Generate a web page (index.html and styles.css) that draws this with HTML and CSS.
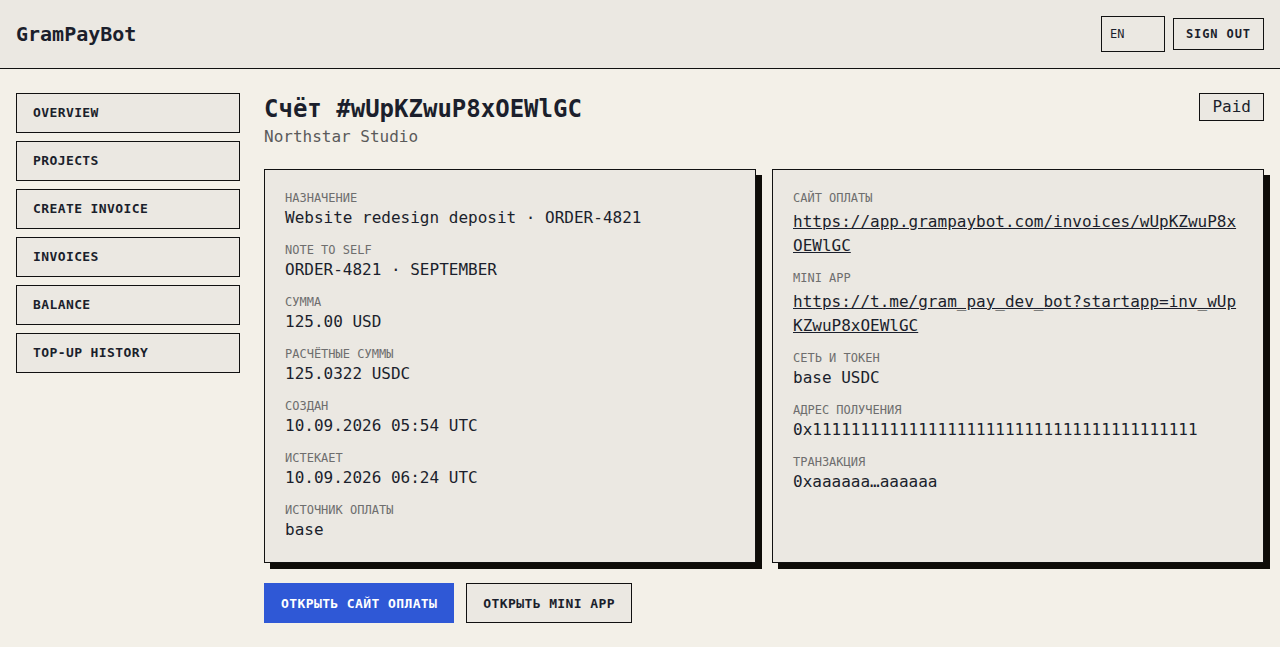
FILE: index.html
```html
<!DOCTYPE html>
<html lang="ru">
<head>
<meta charset="utf-8">
<title>GramPayBot</title>
<link rel="stylesheet" href="styles.css">
</head>
<body>
<header class="topbar">
  <div class="logo">GramPayBot</div>
  <div class="top-actions">
    <div class="lang">EN</div>
    <button class="btn-outline small">SIGN OUT</button>
  </div>
</header>
<div class="layout">
  <nav class="sidebar">
    <a class="nav-item">OVERVIEW</a>
    <a class="nav-item">PROJECTS</a>
    <a class="nav-item">CREATE INVOICE</a>
    <a class="nav-item">INVOICES</a>
    <a class="nav-item">BALANCE</a>
    <a class="nav-item">TOP-UP HISTORY</a>
  </nav>
  <main class="main">
    <div class="page-head">
      <div>
        <h1 class="title">Счёт #wUpKZwuP8xOEWlGC</h1>
        <div class="subtitle">Northstar Studio</div>
      </div>
      <span class="badge">Paid</span>
    </div>
    <div class="cards">
      <section class="card">
        <div class="field"><div class="label">Назначение</div><div class="value">Website redesign deposit · ORDER-4821</div></div>
        <div class="field"><div class="label">Note to self</div><div class="value">ORDER-4821 · SEPTEMBER</div></div>
        <div class="field"><div class="label">Сумма</div><div class="value">125.00 USD</div></div>
        <div class="field"><div class="label">Расчётные суммы</div><div class="value">125.0322 USDC</div></div>
        <div class="field"><div class="label">Создан</div><div class="value">10.09.2026 05:54 UTC</div></div>
        <div class="field"><div class="label">Истекает</div><div class="value">10.09.2026 06:24 UTC</div></div>
        <div class="field"><div class="label">Источник оплаты</div><div class="value">base</div></div>
      </section>
      <section class="card">
        <div class="field"><div class="label">Сайт оплаты</div><a class="value link">https://app.grampaybot.com/invoices/wUpKZwuP8xOEWlGC</a></div>
        <div class="field"><div class="label">Mini App</div><a class="value link">https://t.me/gram_pay_dev_bot?startapp=inv_wUpKZwuP8xOEWlGC</a></div>
        <div class="field"><div class="label">Сеть и токен</div><div class="value">base USDC</div></div>
        <div class="field"><div class="label">Адрес получения</div><div class="value">0x1111111111111111111111111111111111111111</div></div>
        <div class="field"><div class="label">Транзакция</div><div class="value">0xaaaaaa…aaaaaa</div></div>
      </section>
    </div>
    <div class="actions">
      <button class="btn-primary">ОТКРЫТЬ САЙТ ОПЛАТЫ</button>
      <button class="btn-outline">ОТКРЫТЬ MINI APP</button>
    </div>
  </main>
</div>
</body>
</html>
```
FILE: styles.css
```css
* { box-sizing: border-box; }
html, body { margin: 0; padding: 0; }
body {
  background: #f3f0e8;
  color: #1b1f2c;
  font-family: "DejaVu Sans Mono", "Liberation Mono", monospace;
  font-size: 16px;
}
.topbar {
  height: 69px;
  background: #ebe8e2;
  border-bottom: 1px solid #111;
  display: flex;
  align-items: center;
  justify-content: space-between;
  padding: 0 16px;
}
.logo { font-size: 20px; font-weight: bold; line-height: 24px; }
.top-actions { display: flex; align-items: center; gap: 8px; }
.lang {
  width: 64px; height: 36px;
  border: 1px solid #111;
  background: #ebe8e2;
  font-size: 12px;
  line-height: 34px;
  padding: 0 8px;
}
button { font-family: inherit; cursor: pointer; }
.btn-outline, .btn-primary, .nav-item {
  font-weight: bold;
  font-size: 13px;
  letter-spacing: 0.4px;
}
.btn-outline {
  height: 40px;
  border: 1px solid #111;
  background: #ebe8e2;
  color: #1b1f2c;
  padding: 0 16px;
}
.btn-outline.small { height: 32px; padding: 0 12px; font-size: 12px; letter-spacing: 0.9px; }
.btn-primary {
  height: 40px;
  border: 1px solid #2f58d6;
  background: #2f58d6;
  color: #fff;
  padding: 0 16px;
}
.layout {
  display: flex;
  gap: 24px;
  padding: 24px 16px;
}
.sidebar {
  width: 224px;
  flex: none;
  display: flex;
  flex-direction: column;
  gap: 8px;
}
.nav-item {
  display: block;
  height: 40px;
  line-height: 38px;
  border: 1px solid #111;
  background: #ebe8e2;
  padding: 0 16px;
  color: #1b1f2c;
}
.main { flex: 1; min-width: 0; }
.page-head {
  display: flex;
  justify-content: space-between;
  align-items: flex-start;
}
.title { margin: 1px 0 0; font-size: 24px; line-height: 30px; font-weight: bold; }
.subtitle { margin-top: 1px; line-height: 24px; color: #5a5a5a; }
.badge {
  border: 1px solid #111;
  background: #ebe8e2;
  padding: 1px 12px;
  line-height: 24px;
  font-size: 16px;
}
.cards {
  margin-top: 20px;
  display: grid;
  grid-template-columns: 1fr 1fr;
  gap: 16px;
  padding-right: 6px;
  margin-right: -6px;
}
.card {
  border: 1px solid #111;
  background: #ebe8e2;
  box-shadow: 6px 6px 0 #0e0c08;
  padding: 20px;
  display: flex;
  flex-direction: column;
  gap: 12px;
}
.field { display: flex; flex-direction: column; }
.label {
  font-size: 12px;
  line-height: 16px;
  text-transform: uppercase;
  color: #6e6e6e;
}
.value { font-size: 16px; line-height: 24px; word-break: break-all; }
.link { margin-top: 4px; text-decoration: underline; color: #1b1f2c; }
.actions { margin-top: 20px; display: flex; gap: 12px; }
```
